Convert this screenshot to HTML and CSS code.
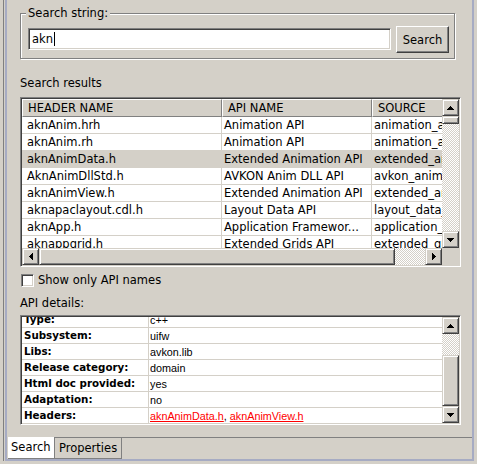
FILE: index.html
```html
<!DOCTYPE html>
<html>
<head>
<meta charset="utf-8">
<link rel="stylesheet" href="styles.css">
</head>
<body>
<div class="window">
  <div class="frame">
    <div class="view">
      <div class="content">
        <div class="group">
          <span class="group-label">Search string:</span>
          <div class="textbox">akn<span class="caret"></span></div>
          <div class="btn">Search</div>
        </div>

        <div class="label label-results">Search results</div>

        <div class="sunken results">
          <div class="viewport">
            <div class="row head">
              <div class="hcell">HEADER NAME</div>
              <div class="hcell">API NAME</div>
              <div class="hcell">SOURCE</div>
            </div>
            <div class="row">
              <div class="cell c1">aknAnim.hrh</div><div class="cell">Animation API</div><div class="cell c3">animation_api</div>
            </div>
            <div class="row">
              <div class="cell c1">aknAnim.rh</div><div class="cell">Animation API</div><div class="cell c3">animation_api</div>
            </div>
            <div class="row selected">
              <div class="cell c1">aknAnimData.h</div><div class="cell">Extended Animation API</div><div class="cell c3">extended_animation_api</div>
            </div>
            <div class="row">
              <div class="cell c1">AknAnimDllStd.h</div><div class="cell">AVKON Anim DLL API</div><div class="cell c3">avkon_anim_dll_api</div>
            </div>
            <div class="row">
              <div class="cell c1">aknAnimView.h</div><div class="cell">Extended Animation API</div><div class="cell c3">extended_animation_api</div>
            </div>
            <div class="row">
              <div class="cell c1">aknapaclayout.cdl.h</div><div class="cell">Layout Data API</div><div class="cell c3">layout_data_api</div>
            </div>
            <div class="row">
              <div class="cell c1">aknApp.h</div><div class="cell">Application Framewor...</div><div class="cell c3">application_framework_api</div>
            </div>
            <div class="row">
              <div class="cell c1">aknappgrid.h</div><div class="cell">Extended Grids API</div><div class="cell c3">extended_grids_api</div>
            </div>
          </div>
          <div class="vscroll">
            <div class="sbtn"><svg width="7" height="4" viewBox="0 0 7 4"><path d="M3 0h1v1h1v1h1v1h1v1H0V3h1V2h1V1h1z"/></svg></div>
            <div class="thumb thumb-results-v"></div>
            <div class="track"></div>
            <div class="sbtn"><svg width="7" height="4" viewBox="0 0 7 4"><path d="M0 0h7v1h-1v1h-1v1h-1v1h-1V3H2V2H1V1H0z"/></svg></div>
          </div>
          <div class="hscroll">
            <div class="sbtn"><svg width="4" height="7" viewBox="0 0 4 7"><path d="M3 0h1v7h-1v-1h-1v-1h-1v-1h-1v-1h1v-1h1v-1h1z"/></svg></div>
            <div class="thumb thumb-results-h"></div>
            <div class="track"></div>
            <div class="sbtn"><svg width="4" height="7" viewBox="0 0 4 7"><path d="M0 0h1v1h1v1h1v1h1v1h-1v1h-1v1h-1v1H0z"/></svg></div>
          </div>
          <div class="corner"></div>
        </div>

        <div class="check-row">
          <span class="checkbox"></span>
          <span>Show only API names</span>
        </div>

        <div class="label label-details">API details:</div>

        <div class="sunken details">
          <div class="viewport">
            <div class="drows">
              <div class="drow"><div class="dkey">Type:</div><div class="dval">c++</div></div>
              <div class="drow"><div class="dkey">Subsystem:</div><div class="dval">uifw</div></div>
              <div class="drow"><div class="dkey">Libs:</div><div class="dval">avkon.lib</div></div>
              <div class="drow"><div class="dkey">Release category:</div><div class="dval">domain</div></div>
              <div class="drow"><div class="dkey">Html doc provided:</div><div class="dval">yes</div></div>
              <div class="drow"><div class="dkey">Adaptation:</div><div class="dval">no</div></div>
              <div class="drow"><div class="dkey">Headers:</div><div class="dval"><a class="lnk">aknAnimData.h</a>, <a class="lnk">aknAnimView.h</a></div></div>
            </div>
          </div>
          <div class="vscroll">
            <div class="sbtn"><svg width="7" height="4" viewBox="0 0 7 4"><path d="M3 0h1v1h1v1h1v1h1v1H0V3h1V2h1V1h1z"/></svg></div>
            <div class="track track-details-top"></div>
            <div class="thumb thumb-details"></div>
            <div class="sbtn"><svg width="7" height="4" viewBox="0 0 7 4"><path d="M0 0h7v1h-1v1h-1v1h-1v1h-1V3H2V2H1V1H0z"/></svg></div>
          </div>
        </div>
        <div class="spacer"></div>
      </div>

      <div class="tabbar">
        <div class="tab tab-active">Search</div>
        <div class="tab tab-props">Properties</div>
        <div class="tab-fill"></div>
      </div>
    </div>
  </div>
</div>
</body>
</html>
```
FILE: styles.css
```css
* { box-sizing: border-box; }
html, body { margin: 0; padding: 0; }
body {
  width: 477px;
  height: 464px;
  overflow: hidden;
  background: #d4d0c8;
  font-family: "DejaVu Sans", sans-serif;
  font-size: 11.5px;
  color: #000;
}

.window { height: 464px; padding-left: 3px; }
.frame {
  width: 471px;
  height: 461px;
  border-left: 1px solid #808080;
  padding-left: 1px;
}
.view {
  width: 469px;
  height: 461px;
  border-left: 2px solid #a6abc3;
  border-right: 2px solid #a6abc3;
  border-bottom: 2px solid #a6abc3;
  display: flex;
  flex-direction: column;
}

.content {
  height: 437px;
  padding: 13px 11px 0 13px;
  display: flex;
  flex-direction: column;
}

/* group box */
.group {
  position: relative;
  width: 435px;
  height: 46px;
  flex: none;
  border: 1px solid #808080;
  box-shadow: inset 1px 1px #fff, 1px 1px #fff;
  display: flex;
  align-items: flex-start;
  gap: 5px;
  padding: 12px 5px 0 7px;
}
.group-label {
  position: absolute;
  top: -8px;
  left: 5px;
  padding: 0 2px;
  line-height: 14px;
  background: #d4d0c8;
}
.textbox {
  width: 363px;
  height: 22px;
  margin-top: 2px;
  background: #fff;
  border: 1px solid;
  border-color: #808080 #fff #fff #808080;
  box-shadow: inset 1px 1px #404040, inset -1px -1px #d4d0c8;
  padding: 0 3px;
  line-height: 20px;
  display: flex;
  align-items: center;
}
.caret {
  display: inline-block;
  width: 1px;
  height: 14px;
  margin-left: 1px;
  background: #000;
}
.btn {
  width: 53px;
  height: 27px;
  background: #d4d0c8;
  border: 1px solid;
  border-color: #fff #404040 #404040 #fff;
  box-shadow: inset -1px -1px #808080;
  display: flex;
  align-items: center;
  justify-content: center;
}

.label { line-height: 13px; height: 13px; flex: none; }
.label-results { margin-top: 18px; }
.label-details { margin-top: 10px; }

/* sunken containers */
.sunken {
  flex: none;
  border: 1px solid;
  border-color: #808080 #fff #fff #808080;
  padding: 1px;
  box-shadow: inset 1px 1px #404040, inset -1px -1px #d4d0c8;
  background: #fff;
}
.results {
  width: 441px;
  height: 170px;
  margin-top: 7px;
  display: grid;
  grid-template-columns: 1fr 17px;
  grid-template-rows: 1fr 17px;
}
.viewport { overflow: hidden; background: #fff; min-width: 0; min-height: 0; }

.row {
  display: grid;
  grid-template-columns: 200px 150px 200px;
  height: 17px;
  white-space: nowrap;
}
.row.head { height: 18px; }
.hcell {
  background: #d4d0c8;
  border-top: 1px solid #fff;
  border-left: 1px solid #fff;
  border-right: 1px solid #808080;
  border-bottom: 1px solid #808080;
  padding-left: 5px;
  line-height: 16px;
  overflow: hidden;
}
.cell {
  border-right: 1px solid #d4d0c8;
  border-bottom: 1px solid #d4d0c8;
  padding-left: 2px;
  line-height: 17px;
  overflow: hidden;
}
.cell.c1 { padding-left: 5px; }
.cell.c3 { border-right: none; }
.row.selected { background: #d4d0c8; }

/* scrollbars */
.vscroll { display: flex; flex-direction: column; min-height: 0; }
.hscroll { display: flex; min-width: 0; }
.corner { background: #d4d0c8; }
.sbtn, .thumb {
  background: #d4d0c8;
  border: 1px solid;
  border-color: #d4d0c8 #404040 #404040 #d4d0c8;
  box-shadow: inset 1px 1px #fff, inset -1px -1px #808080;
  flex: none;
}
.sbtn {
  width: 17px;
  height: 17px;
  display: flex;
  align-items: center;
  justify-content: center;
}
.sbtn svg { display: block; shape-rendering: crispEdges; fill: #000; }
.track {
  flex: 1;
  background-color: #fff;
  background-image: conic-gradient(#d4d0c8 25%, #fff 0 50%, #d4d0c8 0 75%, #fff 0);
  background-size: 2px 2px;
}
.thumb-results-v { height: 8px; }
.thumb-results-h { width: 356px; }
.track-details-top { flex: none; height: 21px; }
.thumb-details { flex: 1; }

/* checkbox */
.check-row {
  margin-top: 7px;
  display: flex;
  align-items: center;
  gap: 4px;
  height: 13px;
  line-height: 13px;
  flex: none;
}
.checkbox {
  width: 13px;
  height: 13px;
  margin-left: 1px;
  background: #fff;
  border: 1px solid;
  border-color: #808080 #fff #fff #808080;
  box-shadow: inset 1px 1px #404040, inset -1px -1px #d4d0c8;
}

/* details */
.details {
  width: 441px;
  height: 110px;
  margin-top: 5px;
  display: grid;
  grid-template-columns: 1fr 17px;
}
.drows { margin-top: -5px; }
.drow {
  display: grid;
  grid-template-columns: 127px 1fr;
  height: 16px;
  border-bottom: 1px solid #d4d0c8;
  white-space: nowrap;
}
.dkey {
  font-weight: bold;
  font-size: 10.3px;
  padding-left: 2px;
  line-height: 15px;
  border-right: 1px solid #d4d0c8;
}
.dval {
  padding-left: 1px;
  font-family: "Liberation Sans", Arial, sans-serif;
  font-size: 10.8px;
  line-height: 16px;
  overflow: hidden;
}
.lnk { color: #f00; text-decoration: underline; }

.spacer { flex: 1; }

/* tabs */
.tabbar {
  height: 22px;
  display: flex;
  padding-left: 1px;
  flex: none;
}
.tab {
  line-height: 20px;
  white-space: nowrap;
}
.tab-active {
  width: 47px;
  background: #fff;
  border-right: 1px solid #808080;
  border-bottom: 1px solid #808080;
  padding-left: 3px;
}
.tab-props {
  width: 67px;
  background: #d4d0c8;
  border-top: 1px solid #808080;
  border-right: 1px solid #808080;
  border-bottom: 1px solid #808080;
  padding-left: 4px;
}
.tab-fill { flex: 1; border-top: 1px solid #808080; }
```
